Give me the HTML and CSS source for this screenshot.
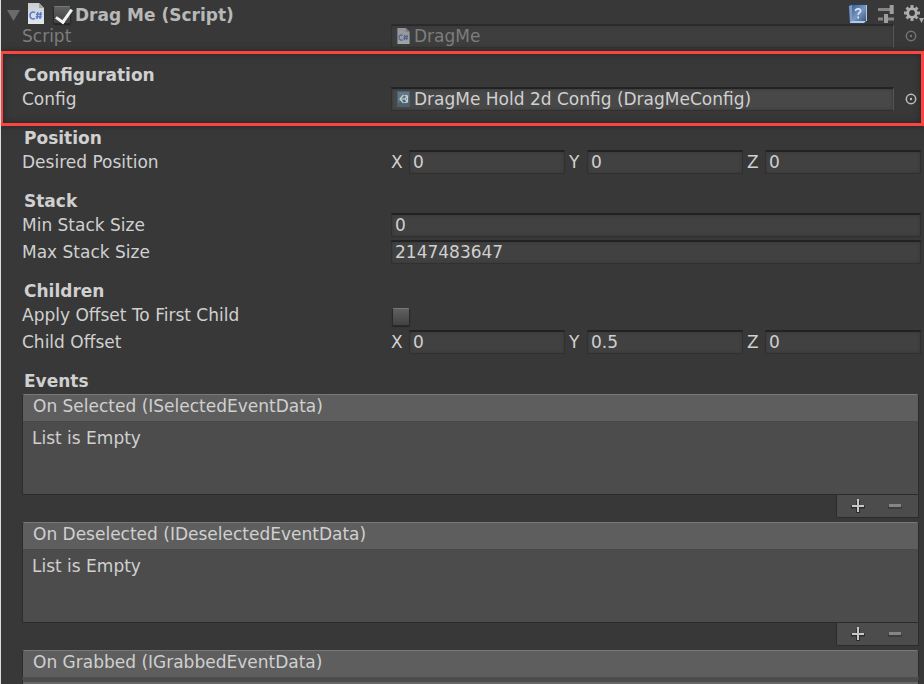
FILE: index.html
```html
<!DOCTYPE html>
<html lang="en">
<head>
<meta charset="utf-8">
<title>Drag Me (Script)</title>
<link rel="stylesheet" href="styles.css">
</head>
<body>
<svg class="defs" aria-hidden="true">
  <defs>
    <linearGradient id="page" x1="0" y1="0" x2="0" y2="1"><stop offset="0" stop-color="#c9ced3"/><stop offset="1" stop-color="#e4e7ea"/></linearGradient>
    <linearGradient id="book" x1="0" y1="0" x2="1" y2="1"><stop offset="0" stop-color="#3c5f93"/><stop offset=".5" stop-color="#7898c2"/><stop offset="1" stop-color="#365683"/></linearGradient>
    <symbol id="script-file" viewBox="0 0 16 21">
      <path d="M0 0h11l5 5v16H0z" fill="url(#page)"/><path d="M11 0v5h5z" fill="#9da4ac"/>
      <path d="M7 9.700C5.500 8.500 2 9 2 12.500s3.500 4 5 2.800M9.800 9l-.8 7M12.800 9l-.8 7M8 11.300h6M7.700 13.800h6" fill="none" stroke="#5b7dd0" stroke-width="1.600"/>
    </symbol>
    <symbol id="picker" viewBox="0 0 12 12"><circle cx="6" cy="6" r="4.700" fill="none" stroke="currentColor" stroke-width="1.500"/><circle cx="6" cy="6" r="1.200" fill="currentColor"/></symbol>
    <symbol id="plus" viewBox="0 0 14 14"><path d="M5 2h4v4.500h5v3H9V14H5V9.500H0v-3h5z" fill="#2c2c2c"/><path d="M6 0h2v6h5v2H8v5H6V8H1V6h5z" fill="#c6c6c6"/></symbol>
    <symbol id="minus" viewBox="0 0 14 14"><path d="M0 7h14v3H0z" fill="#3c3c3c"/><path d="M1 5h12v3H1z" fill="#858585"/></symbol>
  </defs>
</svg>
<main class="inspector">
  <header class="component">
    <button class="fold" aria-label="Collapse"><svg viewBox="0 0 13 11"><path d="M0 0h13L6.500 11z" fill="#6b6b6b"/></svg></button>
    <svg class="file"><use href="#script-file"/></svg>
    <input class="check" type="checkbox" id="enabled" checked>
    <label class="name" for="enabled">Drag Me (Script)</label>
    <div class="tools">
      <button class="help" aria-label="Help"><svg viewBox="0 0 20 20"><path d="M0 2l3-2h16v17l-3 3H2z" fill="#28405f"/><path d="M4 1h15v16H4z" fill="url(#book)"/><path d="M1 2l3-1v16l-2 2z" fill="#7e9bc0"/><path d="M2 18l2-1h14l-2 2H2z" fill="#b9c8da"/><path d="M18 1h1v16h-1z" fill="#b8c8dc"/><path d="M7.500 7C7.800 4 13 4.300 12.500 7c-.3 1.600-2.300 1.700-2.300 3.700M10.200 12.500v2" fill="none" stroke="#dce7f4" stroke-width="1.700"/></svg></button>
      <button class="preset" aria-label="Presets"><svg viewBox="0 0 16 18"><path d="M0 4.500h12M0 14h5M10 14h6" stroke="#858585" stroke-width="3"/><path d="M13.700 0v9M8 9v9" stroke="#9d9d9d" stroke-width="4"/></svg></button>
      <button class="gear" aria-label="Settings"><svg viewBox="0 0 20 18"><g stroke="#a9a9a9" stroke-width="3"><path d="M8 0v16M0 8h16M2.500 2.500l11 11M13.500 2.500l-11 11"/></g><circle cx="8" cy="8" r="4.300" fill="#383838" stroke="#b0b0b0" stroke-width="2.800"/><path d="M15 13h5l-2.500 5z" fill="#a9a9a9"/></svg></button>
    </div>
  </header>
  <div class="row disabled">
    <span class="label">Script</span>
    <div class="object"><button class="asset"><svg class="mini"><use href="#script-file"/></svg>DragMe</button><button class="pick" disabled aria-label="Select script"><svg><use href="#picker"/></svg></button></div>
  </div>

  <section class="group highlight">
    <h2>Configuration</h2>
    <div class="row">
      <span class="label">Config</span>
      <div class="object"><button class="asset"><svg class="mini" viewBox="0 0 13 16"><path d="M0 0h13v16H0z" fill="#4a626e"/><path d="M1 1h11v5L1 12z" fill="#5f7883"/><path d="M6.500 4L3 8l3.500 4M3 8h5M10.500 5L8 8l2.500 3M7.500 4.300l3 .7v6l-3 .7" fill="none" stroke="#c3d0d5" stroke-width="1.200"/></svg>DragMe Hold 2d Config (DragMeConfig)</button><button class="pick" aria-label="Select config"><svg><use href="#picker"/></svg></button></div>
    </div>
  </section>

  <section class="group">
    <h2>Position</h2>
    <div class="row">
      <span class="label">Desired Position</span>
      <div class="vector">
        <label>X<input type="text" value="0"></label><label>Y<input type="text" value="0"></label><label>Z<input type="text" value="0"></label>
      </div>
    </div>
  </section>

  <section class="group">
    <h2>Stack</h2>
    <div class="row"><label class="label" for="min">Min Stack Size</label><input type="text" id="min" value="0"></div>
    <div class="row"><label class="label" for="max">Max Stack Size</label><input type="text" id="max" value="2147483647"></div>
  </section>

  <section class="group">
    <h2>Children</h2>
    <div class="row"><label class="label" for="first">Apply Offset To First Child</label><input class="check" type="checkbox" id="first"></div>
    <div class="row">
      <span class="label">Child Offset</span>
      <div class="vector">
        <label>X<input type="text" value="0"></label><label>Y<input type="text" value="0.5"></label><label>Z<input type="text" value="0"></label>
      </div>
    </div>
  </section>

  <section class="group">
    <h2>Events</h2>
    <div class="event">
      <h3>On Selected (ISelectedEventData)</h3>
      <p>List is Empty</p>
      <div class="actions"><button aria-label="Add"><svg><use href="#plus"/></svg></button><button aria-label="Remove"><svg><use href="#minus"/></svg></button></div>
    </div>
    <div class="event">
      <h3>On Deselected (IDeselectedEventData)</h3>
      <p>List is Empty</p>
      <div class="actions"><button aria-label="Add"><svg><use href="#plus"/></svg></button><button aria-label="Remove"><svg><use href="#minus"/></svg></button></div>
    </div>
    <div class="event">
      <h3>On Grabbed (IGrabbedEventData)</h3>
      <div class="entry"></div>
    </div>
  </section>
</main>
</body>
</html>
```
FILE: styles.css
```css
* { box-sizing: border-box; }
body { margin: 0; background: #383838; }
.defs { position: absolute; width: 0; height: 0; }
.inspector {
  height: 100vh;
  overflow: hidden;
  border-left: 1px solid #dcdcdc;
  background: #383838;
  color: #d0d0d0;
  font: 17px/24px "DejaVu Sans", Verdana, sans-serif;
}
button, input { font: inherit; color: inherit; margin: 0; }
button { padding: 0; border: 0; background: none; }
svg { display: block; }

.component { display: flex; align-items: center; height: 24px; padding: 0 0 0 6px; }
.fold svg { width: 13px; height: 11px; margin-top: 6px; }
.file { width: 16px; height: 21px; margin: 2px 9px 0 8px; }
.name { margin: 6px 0 0 4px; font-weight: bold; color: #b8b8b8; }
.tools { display: flex; gap: 10px; margin: 3px 0 0 auto; }
.help svg { width: 20px; height: 20px; }
.preset svg { width: 16px; height: 18px; }
.gear svg { width: 20px; height: 18px; }

.check {
  appearance: none;
  width: 18px;
  height: 18px;
  border: 1px solid #292929;
  border-top-color: #777;
  border-radius: 2px;
  background: linear-gradient(#606060, #424242);
  box-shadow: 0 1px 1px #252525;
}
.component .check { position: relative; margin-top: 5px; }
.check:checked::after {
  content: "";
  position: absolute;
  left: 5px;
  top: -1px;
  width: 7px;
  height: 14px;
  border: solid #f4f4f4;
  border-width: 0 3px 3px 0;
  transform: rotate(35deg);
}
.row .check { align-self: center; margin: 4px 0 0 1px; }

.row {
  display: grid;
  grid-template-columns: minmax(0, 369fr) minmax(0, 530fr);
  height: 24px;
  padding: 0 3px 0 21px;
}
.row + .row { margin-top: 3px; }
.group { padding-top: 15px; }
h2 { margin: 0; padding-left: 23px; font-size: 17px; line-height: 24px; }

input[type="text"], .asset {
  width: 100%;
  min-width: 0;
  height: 24px;
  padding: 0 3px 2px;
  border: 1px solid #303030;
  border-top: 2px solid #222;
  border-radius: 0;
  outline: 0;
  background: #414141;
  box-shadow: inset 0 0 3px #333;
}
.vector { display: grid; grid-template-columns: repeat(3, minmax(0, 1fr)); gap: 4px; }
.vector label { display: grid; grid-template-columns: 18px minmax(0, 1fr); }
.object { display: flex; }
.asset { flex: 1; display: flex; align-items: center; gap: 4px; padding: 0 5px 2px; border-right-color: #555; text-align: left; white-space: nowrap; background: #484848; }
.mini { width: 13px; height: 16px; }
.pick { width: 27px; padding-left: 11px; color: #bdbdbd; }
.pick svg { width: 12px; height: 12px; }
.disabled { color: #7d7d7d; }
.disabled .asset { border-top-color: #2b2b2b; background: #3e3e3e; }
.disabled .mini { opacity: .6; }
.disabled .pick { color: #747474; }

.highlight {
  margin: 3px 0 0 -1px;
  padding: 9px 0 12px;
  border: 3px solid #ff4341;
  box-shadow: inset 0 0 7px #252525, 0 0 6px #252525;
}
.highlight h2 { padding-left: 21px; }
.highlight .row { padding: 0 0 0 19px; }
.highlight + .group { padding-top: 0; }

.event { margin: 1px 5px 4px 21px; }
h3 {
  height: 27px;
  margin: 0;
  padding: 0 10px;
  border: 1px solid #2b2b2b;
  border-top-color: #787878;
  border-bottom: 0;
  border-radius: 3px 3px 0 0;
  background: #5e5e5e;
  font-size: 17px;
  font-weight: normal;
  line-height: 23px;
}
.event p {
  height: 74px;
  margin: 0;
  padding: 4px 9px;
  border: 1px solid #2b2b2b;
  border-top-color: #484848;
  border-radius: 0 0 2px 2px;
  background: #4c4c4c;
}
.actions {
  display: flex;
  align-items: center;
  justify-content: center;
  gap: 23px;
  width: 83px;
  height: 23px;
  margin-left: auto;
  padding-right: 2px;
  border: 1px solid #2b2b2b;
  border-top: 0;
  border-radius: 0 0 2px 2px;
  background: #4c4c4c;
}
.actions svg { width: 14px; height: 14px; }
.entry { height: 74px; border: 1px solid #2b2b2b; border-top: 5px solid #4c4c4c; background: #666; }
```
